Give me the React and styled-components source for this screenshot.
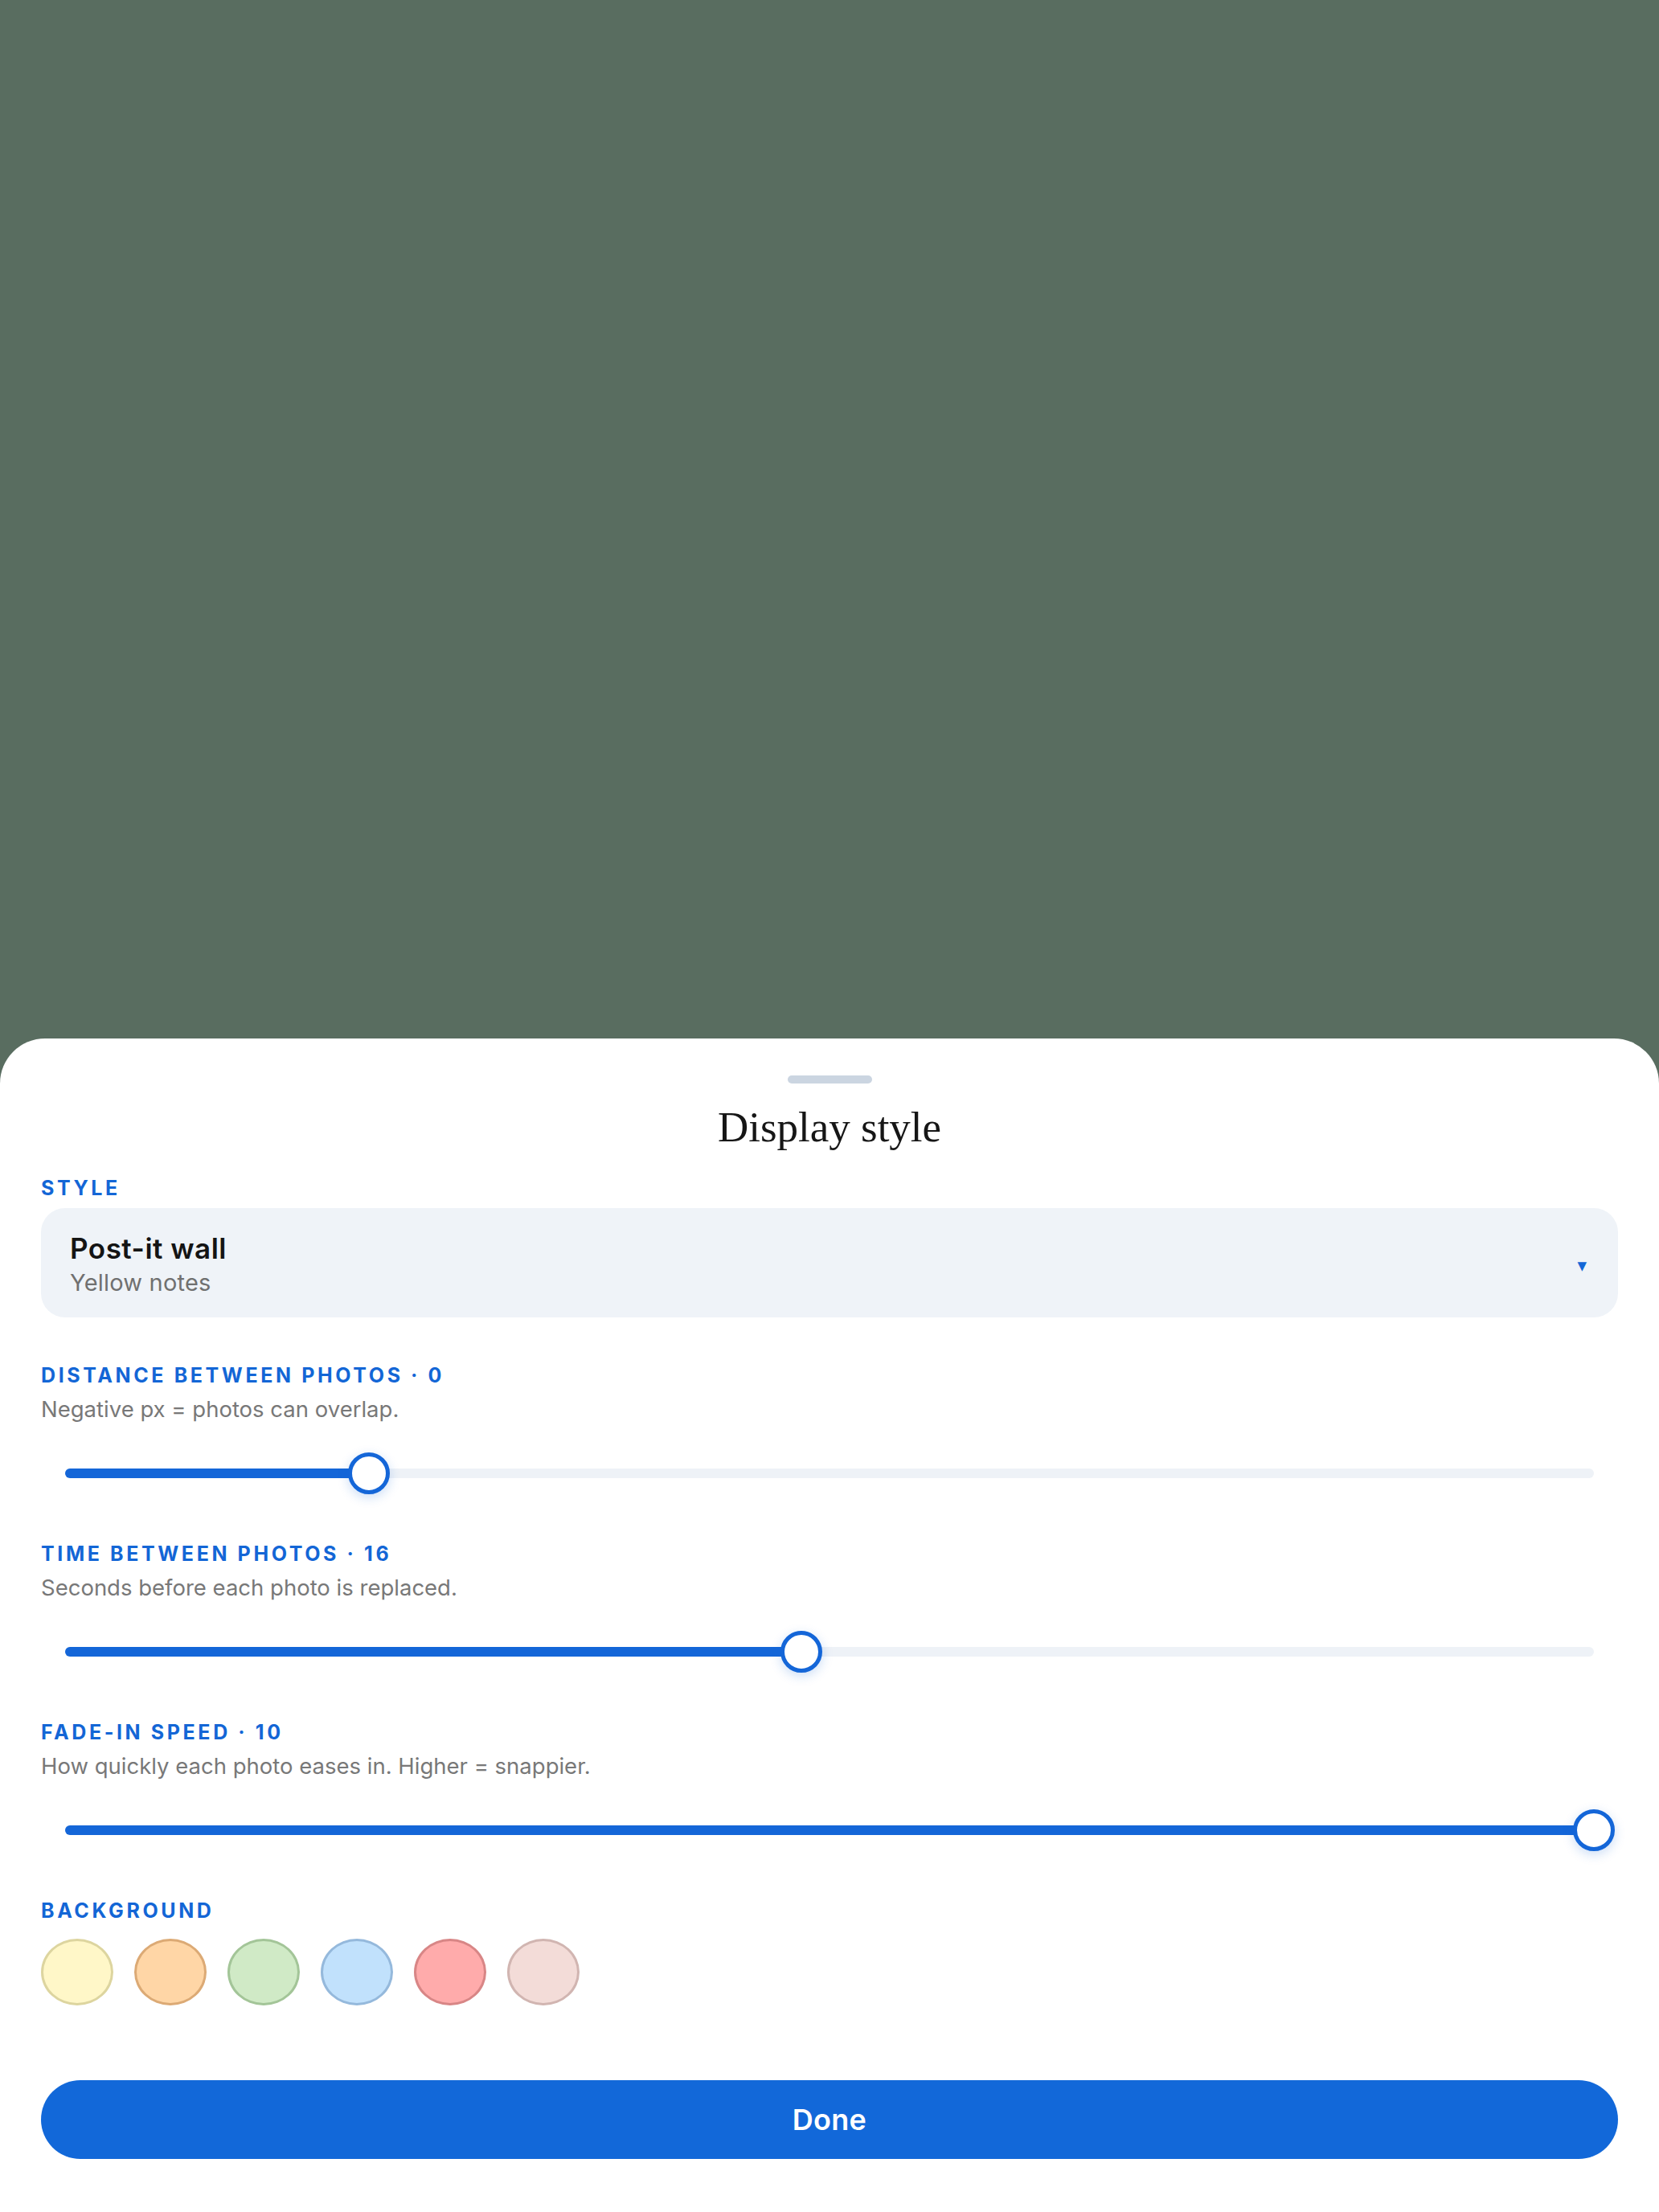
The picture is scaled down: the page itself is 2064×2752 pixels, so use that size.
import React from "react";
import styled, { createGlobalStyle } from "styled-components";

const GlobalStyle = createGlobalStyle`
  html, body {
    margin: 0;
    padding: 0;
    background: #596d60;
  }
  * {
    box-sizing: border-box;
  }
`;

const Page = styled.div`
  min-height: 100vh;
  display: flex;
  flex-direction: column;
  font-family: Inter, "Noto Sans", sans-serif;
`;

const Sheet = styled.section`
  margin-top: auto;
  background: #fff;
  border-radius: 56px 56px 0 0;
  padding: 46px 51px 66px;
  display: flex;
  flex-direction: column;
`;

const Handle = styled.div`
  width: 105px;
  height: 10px;
  border-radius: 5px;
  background: #cbd5e1;
  margin: 0 auto;
`;

const Title = styled.h2`
  margin: 22px 0 0;
  text-align: center;
  font-family: "Liberation Serif", serif;
  font-weight: 400;
  font-size: 53px;
  line-height: 64px;
  color: #161616;
`;

const Label = styled.div`
  margin-top: ${(p) => p.$top || 0}px;
  font-size: 25px;
  line-height: 30px;
  font-weight: 700;
  letter-spacing: 3.6px;
  text-transform: uppercase;
  color: #1366d6;
`;

const Select = styled.div`
  margin-top: 10px;
  height: 136px;
  border-radius: 30px;
  background: #eff3f8;
  padding: 0 39px 0 36px;
  display: flex;
  align-items: center;
  justify-content: space-between;
`;

const SelectText = styled.div`
  padding-top: 6px;
  display: flex;
  flex-direction: column;
`;

const SelectName = styled.div`
  font-size: 35px;
  line-height: 40px;
  font-weight: 600;
  letter-spacing: 0.5px;
  color: #141414;
`;

const SelectSub = styled.div`
  margin-top: 4px;
  font-size: 29px;
  line-height: 38px;
  letter-spacing: 0.2px;
  color: #707070;
`;

const Caret = styled.span`
  font-family: "DejaVu Sans", sans-serif;
  font-size: 15px;
  line-height: 1;
  color: #1366d6;
  margin-top: 8px;
`;

const Fields = styled.div`
  margin-top: 57px;
  display: flex;
  flex-direction: column;
  gap: 59px;
`;

const Field = styled.div`
  display: flex;
  flex-direction: column;
`;

const Desc = styled.div`
  margin-top: 10px;
  font-size: 27.5px;
  line-height: 34px;
  color: #787878;
`;

const SliderWrap = styled.div`
  margin-top: 37px;
  height: 52px;
  padding: 0 30px;
  display: flex;
  align-items: center;
`;

const Track = styled.div`
  position: relative;
  flex: 1;
  height: 12px;
  border-radius: 6px;
  background: #eef2f7;
`;

const Fill = styled.div`
  height: 100%;
  border-radius: 6px;
  background: #1466d8;
`;

const Thumb = styled.div`
  position: absolute;
  top: 50%;
  width: 52px;
  height: 52px;
  border-radius: 50%;
  background: #fff;
  border: 5px solid #1466d8;
  transform: translate(-50%, -50%);
  box-shadow: 0 4px 14px rgba(20, 102, 216, 0.22);
`;

const Swatches = styled.div`
  margin-top: 20px;
  display: flex;
  gap: 26px;
`;

const Swatch = styled.div`
  width: 90px;
  height: 83px;
  border-radius: 50%;
  background: ${(p) => p.$fill};
  border: 3px solid ${(p) => p.$edge};
`;

const DoneButton = styled.button`
  margin-top: 93px;
  height: 98px;
  border: none;
  border-radius: 49px;
  background: #1268d9;
  color: #fff;
  font-family: Inter, "Noto Sans", sans-serif;
  font-size: 36px;
  font-weight: 600;
  letter-spacing: 0.3px;
`;

const sliders = [
  { label: "Distance between photos · 0", desc: "Negative px = photos can overlap.", frac: 0.199 },
  { label: "Time between photos · 16", desc: "Seconds before each photo is replaced.", frac: 0.4816 },
  { label: "Fade-in speed · 10", desc: "How quickly each photo eases in. Higher = snappier.", frac: 1 },
];

const colors = [
  { fill: "#fff7c8", edge: "#ddd59f" },
  { fill: "#ffd6a6", edge: "#dcaa75" },
  { fill: "#d0eac6", edge: "#a3c598" },
  { fill: "#c1e1fc", edge: "#95b9dc" },
  { fill: "#ffabab", edge: "#d88686" },
  { fill: "#f3dcd8", edge: "#d1b5b1" },
];

const Slider = ({ frac }) => (
  <SliderWrap>
    <Track>
      <Fill style={{ width: `${frac * 100}%` }} />
      <Thumb style={{ left: `${frac * 100}%` }} />
    </Track>
  </SliderWrap>
);

export default function App() {
  return (
    <Page>
      <GlobalStyle />
      <Sheet>
        <Handle />
        <Title>Display style</Title>
        <Label $top={29}>Style</Label>
        <Select>
          <SelectText>
            <SelectName>Post-it wall</SelectName>
            <SelectSub>Yellow notes</SelectSub>
          </SelectText>
          <Caret>▼</Caret>
        </Select>
        <Fields>
          {sliders.map((s) => (
            <Field key={s.label}>
              <Label>{s.label}</Label>
              <Desc>{s.desc}</Desc>
              <Slider frac={s.frac} />
            </Field>
          ))}
          <Field>
            <Label>Background</Label>
            <Swatches>
              {colors.map((c) => (
                <Swatch key={c.fill} $fill={c.fill} $edge={c.edge} />
              ))}
            </Swatches>
          </Field>
        </Fields>
        <DoneButton>Done</DoneButton>
      </Sheet>
    </Page>
  );
}
